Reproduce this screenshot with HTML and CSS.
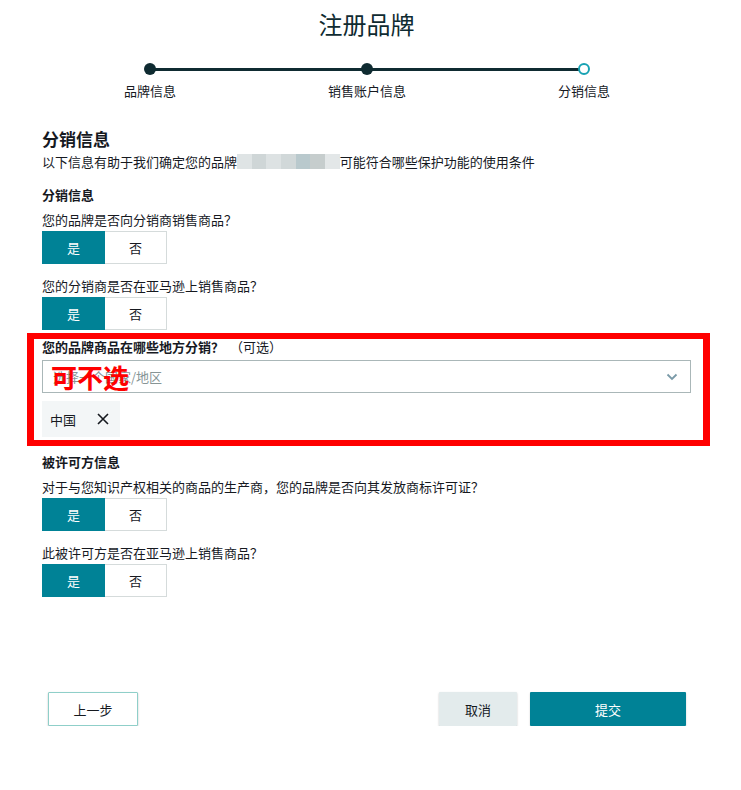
FILE: index.html
```html
<!DOCTYPE html>
<html lang="zh-CN">
<head>
<meta charset="utf-8">
<title>注册品牌</title>
<link rel="stylesheet" href="styles.css">
</head>
<body>
<div class="page">
  <h1 class="title">注册品牌</h1>

  <div class="stepper">
    <div class="step done"><span class="dot"></span><span class="step-label">品牌信息</span></div>
    <div class="step done"><span class="dot"></span><span class="step-label">销售账户信息</span></div>
    <div class="step current"><span class="dot"></span><span class="step-label">分销信息</span></div>
  </div>

  <h2 class="section-title">分销信息</h2>
  <p class="intro">以下信息有助于我们确定您的品牌<span class="mosaic"><i class="m1"></i><i class="m2"></i><i class="m3"></i><i class="m4"></i><i class="m5"></i><i class="m6"></i><i class="m7"></i></span>可能符合哪些保护功能的使用条件</p>

  <h3 class="group-title">分销信息</h3>
  <p class="question">您的品牌是否向分销商销售商品？</p>
  <div class="toggle"><button class="opt on">是</button><button class="opt">否</button></div>

  <p class="question q-gap">您的分销商是否在亚马逊上销售商品？</p>
  <div class="toggle"><button class="opt on">是</button><button class="opt">否</button></div>

  <div class="highlight">
    <p class="field-label"><b>您的品牌商品在哪些地方分销？</b><span class="optional">（可选）</span></p>
    <div class="select">
      <span class="placeholder">选择一个国家/地区</span>
      <svg class="chevron" width="12" height="8" viewBox="0 0 12 8"><path d="M1.5 1.5 L6 6 L10.5 1.5" fill="none" stroke="#7a9aa8" stroke-width="1.8"/></svg>
      <span class="note">可不选</span>
    </div>
    <div class="chip"><span>中国</span><svg class="x" width="12" height="12" viewBox="0 0 12 12"><path d="M1 1 L11 11 M11 1 L1 11" stroke="#16191f" stroke-width="1.6"/></svg></div>
  </div>

  <h3 class="group-title lic">被许可方信息</h3>
  <p class="question">对于与您知识产权相关的商品的生产商，您的品牌是否向其发放商标许可证？</p>
  <div class="toggle"><button class="opt on">是</button><button class="opt">否</button></div>

  <p class="question q-gap">此被许可方是否在亚马逊上销售商品？</p>
  <div class="toggle"><button class="opt on">是</button><button class="opt">否</button></div>

  <div class="actions">
    <button class="btn back">上一步</button>
    <div class="right">
      <button class="btn cancel">取消</button>
      <button class="btn submit">提交</button>
    </div>
  </div>
</div>
</body>
</html>
```

FILE: styles.css
```css
* { box-sizing: border-box; }
html, body { margin: 0; padding: 0; background: #fff; }
body {
  font-family: "Noto Sans CJK SC", "Noto Sans", "Liberation Sans", sans-serif;
  color: #16191f;
  font-size: 13px;
}
.page {
  width: 741px;
  padding: 8px 0 0 42px;
}
p, h1, h2, h3 { margin: 0; }
.title {
  width: 649px;
  text-align: center;
  font-size: 24px;
  font-weight: 400;
  line-height: 32px;
  color: #0f2b31;
}

.stepper {
  display: flex;
  width: 651px;
  margin-top: 23px;
  margin-left: -0.5px;
}
.step {
  position: relative;
  width: 217px;
  display: flex;
  flex-direction: column;
  align-items: center;
}
.step .dot {
  width: 12px;
  height: 12px;
  border-radius: 50%;
  background: #0f2b31;
  position: relative;
  z-index: 1;
}
.step.done::after {
  content: "";
  position: absolute;
  left: 108.5px;
  width: 217px;
  top: 5px;
  height: 3px;
  background: #0f2b31;
}
.step.current .dot {
  background: #fff;
  border: 2px solid #17a2b3;
}
.step-label {
  margin-top: 7px;
  line-height: 18px;
  font-size: 13px;
  color: #16191f;
}

.section-title {
  margin-top: 27px;
  font-size: 17px;
  font-weight: 700;
  line-height: 24px;
}
.intro {
  margin-top: 2px;
  line-height: 18px;
}
.mosaic {
  display: inline-flex;
  vertical-align: top;
  margin-top: 1px;
  height: 15px;
}
.mosaic i { display: block; width: 14.7px; height: 15px; }
.mosaic .m1 { background: #dfe4e5; }
.mosaic .m2 { background: #cfd6d7; }
.mosaic .m3 { background: #dde2e3; }
.mosaic .m4 { background: #d1d8d9; }
.mosaic .m5 { background: #b9c9cd; }
.mosaic .m6 { background: #c6cdcd; }
.mosaic .m7 { background: #e3e7e8; }

.group-title {
  margin-top: 15px;
  font-size: 13px;
  font-weight: 700;
  line-height: 18px;
}
.question {
  margin-top: 7px;
  line-height: 18px;
}
.question.q-gap { margin-top: 13px; }

.toggle {
  display: flex;
  margin-top: 2px;
}
.opt {
  font-family: inherit;
  font-size: 13px;
  height: 33px;
  width: 62px;
  border: 1px solid #d5dbdb;
  background: #fff;
  color: #16191f;
  padding: 0;
  cursor: pointer;
}
.opt.on {
  width: 63px;
  background: #008296;
  border-color: #008296;
  color: #fff;
}
.opt + .opt { border-left: none; }

.highlight {
  margin-top: 3px;
  margin-left: -15px;
  width: 683px;
  border: 7px solid #ff0000;
  border-top-width: 6px;
  border-bottom-width: 6px;
  padding: 0 12px 3px 8px;
}
.field-label {
  line-height: 16px;
}
.optional { margin-left: 6px; font-weight: 400; }
.select {
  position: relative;
  margin-top: 5px;
  height: 33px;
  border: 1px solid #aab7b8;
  display: flex;
  align-items: center;
  padding: 0 10px;
}
.placeholder { color: #879596; flex: 1; }
.chevron { margin-right: 2px; }
.note {
  position: absolute;
  left: 8px;
  top: 1px;
  font-size: 26px;
  font-weight: 700;
  color: #ff0000;
  line-height: 30px;
}
.chip {
  margin-top: 8px;
  width: 78px;
  height: 36px;
  background: #f3f6f7;
  display: flex;
  align-items: center;
  padding-left: 8px;
}
.chip .x { margin-left: 21px; }

.group-title.lic { margin-top: 7px; }

.actions {
  margin-top: 95px;
  width: 638px;
  margin-left: 6px;
  display: flex;
  justify-content: space-between;
}
.btn {
  font-family: inherit;
  font-size: 13px;
  height: 34px;
  padding: 0;
  cursor: pointer;
  border-radius: 1px;
}
.back {
  width: 90px;
  background: #fff;
  border: 1px solid #8fcfc9;
  box-shadow: 0 1px 2px rgba(0,0,0,0.25);
  color: #16191f;
}
.right { display: flex; gap: 13px; }
.cancel {
  width: 78px;
  background: #e3ebec;
  border: none;
  box-shadow: 0 1px 2px rgba(0,0,0,0.25);
  color: #16191f;
}
.submit {
  width: 156px;
  background: #008296;
  border: none;
  color: #fff;
  box-shadow: 0 1px 2px rgba(0,0,0,0.2);
}
```
